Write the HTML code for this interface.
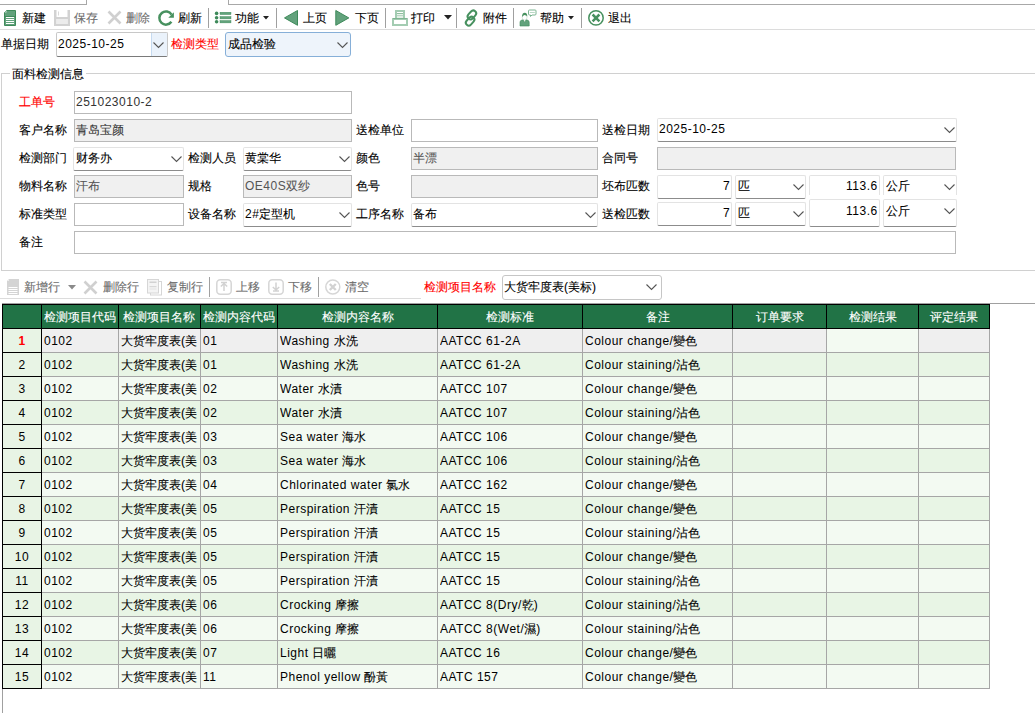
<!DOCTYPE html>
<html><head><meta charset="utf-8"><title>面料检测</title><style>
*{box-sizing:border-box}
html,body{margin:0;padding:0;background:#fff;width:1035px;height:713px;overflow:hidden;position:relative;font-family:"Liberation Sans",sans-serif;font-size:12px;color:#000}
.t{position:absolute;white-space:nowrap;line-height:16px;-webkit-text-stroke:0.1px currentColor}
.l{letter-spacing:0.5px;-webkit-text-stroke:0}
.a{position:absolute}
.g{color:#6d6d6d}
.red{color:#ff0000}
.inp{position:absolute;border:1px solid #b9b9b9;background:#fff}
.inp.dis{background:#f0f0f0}
.cmb{position:absolute;border:1px solid #e3e3e3;border-bottom:1px solid #8c8c8c;border-radius:2px;background:#fff}
.sep{position:absolute;width:1px;background:#a0a0a0}
svg{position:absolute;overflow:visible}
</style></head>
<body>
<div class="a" style="left:-1px;top:-10px;width:88px;height:15px;border-right:1px solid #a8a8a8;border-bottom:1px solid #a8a8a8"></div>
<div class="a" style="left:228px;top:-10px;width:820px;height:15px;border-left:1px solid #a8a8a8;border-bottom:1px solid #a8a8a8"></div>
<div class="a" style="left:0;top:29px;width:1035px;height:1px;background:#dcdcdc"></div>
<svg style="left:4px;top:10px" width="12" height="16"><path d="M2.5 0.5 H11.5 V15.5 H0.5 V2.5 Z" fill="#62a27c" stroke="#3e8a5a"/>
<path d="M0.5 2.5 L2.5 0.5 L2.5 2.5 Z" fill="#cfe3d6"/>
<rect x="1" y="6" width="10" height="1" fill="#3e8a5a"/>
<rect x="2" y="7" width="8" height="1" fill="#fff"/><rect x="2" y="9" width="8" height="1" fill="#fff"/><rect x="2" y="11" width="8" height="1" fill="#fff"/><rect x="2" y="13" width="8" height="1" fill="#fff"/></svg>
<div class="t" style="left:22px;top:10px;">新建</div>
<svg style="left:54px;top:10px" width="16" height="16"><rect x="0" y="0" width="2.5" height="16" fill="#d2d2d2"/><rect x="13.5" y="0" width="2.5" height="16" fill="#d2d2d2"/><rect x="0" y="7" width="16" height="2" fill="#d2d2d2"/><rect x="0" y="14" width="16" height="2" fill="#d2d2d2"/><rect x="2.5" y="9" width="11" height="5" fill="#ececec"/><rect x="4" y="1.5" width="1" height="4" fill="#dadada"/></svg>
<div class="t" style="left:74px;top:10px;color:#6d6d6d;">保存</div>
<svg style="left:107px;top:10px" width="15" height="15"><path d="M1.5 1.5 L13.5 13.5 M13.5 1.5 L1.5 13.5" stroke="#d0d0d0" stroke-width="2.6"/></svg>
<div class="t" style="left:126px;top:10px;color:#6d6d6d;">删除</div>
<svg style="left:158px;top:10px" width="17" height="16"><path d="M13.6 4.6 A6.6 6.6 0 1 0 13.4 11.8" fill="none" stroke="#47915f" stroke-width="2.5"/><path d="M15.9 2.2 L15.9 7.8 L10.3 7.8 Z" fill="#47915f"/></svg>
<div class="t" style="left:178px;top:10px;">刷新</div>
<div class="sep" style="left:208px;top:8px;height:20px"></div>
<svg style="left:214px;top:11px" width="18" height="13"><circle cx="2.6" cy="2.4" r="1.8" fill="#3e8a5a"/><circle cx="2.6" cy="6.7" r="1.8" fill="#3e8a5a"/><circle cx="2.6" cy="10.7" r="1.8" fill="#3e8a5a"/>
<rect x="6" y="1.2" width="11" height="2.4" fill="#62a27c" stroke="#3e8a5a" stroke-width="0.4"/><rect x="6" y="5.5" width="11" height="2.4" fill="#62a27c" stroke="#3e8a5a" stroke-width="0.4"/><rect x="6" y="9.5" width="11" height="2.4" fill="#62a27c" stroke="#3e8a5a" stroke-width="0.4"/></svg>
<div class="t" style="left:235px;top:10px;">功能</div>
<svg style="left:263px;top:16px" width="6" height="4"><path d="M0 0 H6 L3 3.5 Z" fill="#222"/></svg>
<div class="sep" style="left:276px;top:8px;height:20px"></div>
<svg style="left:284px;top:10px" width="15" height="16"><path d="M13.5 0.5 V15.3 L0.5 7.9 Z" fill="#62a27c" stroke="#3e8a5a" stroke-width="1"/></svg>
<div class="t" style="left:303px;top:10px;">上页</div>
<svg style="left:335px;top:10px" width="15" height="16"><path d="M0.8 0.5 V15.3 L13.8 7.9 Z" fill="#62a27c" stroke="#3e8a5a" stroke-width="1"/></svg>
<div class="t" style="left:355px;top:10px;">下页</div>
<div class="sep" style="left:385px;top:8px;height:20px"></div>
<svg style="left:392px;top:10px" width="16" height="16"><rect x="4" y="1" width="8" height="8" fill="#fff" stroke="#a3ccb2" stroke-width="2"/><rect x="5" y="3" width="6" height="1.2" fill="#8fbf9f"/><rect x="5" y="5.2" width="6" height="1.2" fill="#a9d0b6"/><rect x="5" y="6.4" width="6" height="1.6" fill="#e3efe7"/>
<rect x="1" y="9" width="14" height="6" fill="#fff" stroke="#a3ccb2" stroke-width="2"/><rect x="1" y="8" width="14" height="1" fill="#7fb592"/></svg>
<div class="t" style="left:411px;top:10px;">打印</div>
<svg style="left:444px;top:15px" width="8" height="5"><path d="M0 0 H8 L4 4.5 Z" fill="#222"/></svg>
<div class="sep" style="left:456px;top:8px;height:20px"></div>
<svg style="left:464px;top:9px" width="15" height="18"><g fill="none" stroke="#47915f" stroke-width="2">
<rect x="-4.9" y="-2.9" width="9.8" height="5.8" rx="2.9" transform="translate(7.9 5.9) rotate(-48)"/>
<rect x="-4.9" y="-2.9" width="9.8" height="5.8" rx="2.9" transform="translate(6.1 12.2) rotate(-48)"/></g></svg>
<div class="t" style="left:483px;top:10px;">附件</div>
<div class="sep" style="left:513px;top:8px;height:20px"></div>
<svg style="left:519px;top:9px" width="18" height="17"><ellipse cx="5.6" cy="8.3" rx="2.4" ry="2.8" fill="#fff" stroke="#c9ded0" stroke-width="0.7"/>
<path d="M3 8.2 Q3 3.8 5.8 3.8 Q8.4 3.8 8.3 7.6 Q7.4 6 5.6 5.9 Q3.8 6.1 3 8.2 Z" fill="#47915f"/>
<path d="M1 17 V13.2 Q1 11.6 2.8 11.1 L4.2 10.9 L5.6 13.4 L7 10.9 L8.4 11.1 Q10.2 11.6 10.2 13.2 V17 Z" fill="#62a27c" stroke="#3e8a5a" stroke-width="0.6"/>
<path d="M9.5 1.8 Q9.5 1 10.5 1 H16 Q17 1 17 1.8 V5 Q17 6 16 6 H13 L11.5 7.5 L11.5 6 H10.5 Q9.5 6 9.5 5 Z" fill="#fff" stroke="#7db592" stroke-width="1"/><rect x="10.8" y="3" width="5" height="1" fill="#b9d8c4"/></svg>
<div class="t" style="left:540px;top:10px;">帮助</div>
<svg style="left:568px;top:16px" width="6" height="4"><path d="M0 0 H6 L3 3.5 Z" fill="#222"/></svg>
<div class="sep" style="left:581px;top:8px;height:20px"></div>
<svg style="left:588px;top:10px" width="17" height="16"><circle cx="8" cy="7.9" r="7.2" fill="#fff" stroke="#47915f" stroke-width="1.5"/><path d="M4.6 4.5 L11.4 11.3 M11.4 4.5 L4.6 11.3" stroke="#47915f" stroke-width="2.5"/></svg>
<div class="t" style="left:608px;top:10px;">退出</div>
<div class="t" style="left:1px;top:36px;">单据日期</div>
<div class="inp" style="left:56px;top:32px;width:112px;height:25px;border-color:#c8c8c8;border-bottom-color:#7a7a7a;border-radius:2px"></div>
<div class="a" style="left:151px;top:33px;width:16px;height:23px;background:#eaf2fb;border-left:1px solid #c5daf0"></div>
<svg class="a" style="left:153px;top:42px" width="11" height="7"><path d="M0.5 0.5 L5.5 5.5 L10.5 0.5" fill="none" stroke="#555" stroke-width="1.1"/></svg>
<div class="t" style="left:58px;top:36px;"><span class="l">2025-10-25</span></div>
<div class="t" style="left:171px;top:36px;color:#ff0000;">检测类型</div>
<div class="a" style="left:225px;top:32px;width:126px;height:25px;border:1px solid #86afd8;border-radius:3px;background:#eef4fb"></div>
<div class="t" style="left:228px;top:36px;">成品检验</div>
<svg class="a" style="left:337px;top:42px" width="11" height="7"><path d="M0.5 0.5 L5.5 5.5 L10.5 0.5" fill="none" stroke="#555" stroke-width="1.1"/></svg>
<div class="a" style="left:1px;top:73px;width:1040px;height:198px;border:1px solid #d0d0d0;border-right:none"></div>
<div class="t" style="left:10px;top:66px;background:#fff;padding:0 2px">面料检测信息</div>
<div class="t" style="left:19px;top:94px;color:#ff0000;">工单号</div>
<div class="inp" style="left:74px;top:91px;width:278px;height:23px;"></div>
<div class="t" style="left:76px;top:94px;color:#333;"><span class="l">251023010-2</span></div>
<div class="t" style="left:19px;top:122px;">客户名称</div>
<div class="inp dis" style="left:74px;top:119px;width:278px;height:23px;"></div>
<div class="t" style="left:76px;top:122px;color:#333;">青岛宝颜</div>
<div class="t" style="left:356px;top:122px;">送检单位</div>
<div class="inp" style="left:411px;top:119px;width:187px;height:23px;"></div>
<div class="t" style="left:602px;top:122px;">送检日期</div>
<div class="cmb" style="left:657px;top:118px;width:300px;height:24px;"></div>
<svg class="a" style="left:944px;top:127px" width="11" height="7"><path d="M0.5 0.5 L5.5 5.5 L10.5 0.5" fill="none" stroke="#555" stroke-width="1.1"/></svg>
<div class="t" style="left:659px;top:121px;"><span class="l">2025-10-25</span></div>
<div class="t" style="left:19px;top:150px;">检测部门</div>
<div class="cmb" style="left:73px;top:147px;width:111px;height:24px;"></div>
<svg class="a" style="left:171px;top:156px" width="11" height="7"><path d="M0.5 0.5 L5.5 5.5 L10.5 0.5" fill="none" stroke="#555" stroke-width="1.1"/></svg>
<div class="t" style="left:76px;top:150px;">财务办</div>
<div class="t" style="left:188px;top:150px;">检测人员</div>
<div class="cmb" style="left:243px;top:147px;width:109px;height:24px;"></div>
<svg class="a" style="left:339px;top:156px" width="11" height="7"><path d="M0.5 0.5 L5.5 5.5 L10.5 0.5" fill="none" stroke="#555" stroke-width="1.1"/></svg>
<div class="t" style="left:245px;top:150px;">黄棠华</div>
<div class="t" style="left:356px;top:150px;">颜色</div>
<div class="inp dis" style="left:411px;top:147px;width:187px;height:23px;"></div>
<div class="t" style="left:413px;top:150px;color:#555;">半漂</div>
<div class="t" style="left:602px;top:150px;">合同号</div>
<div class="inp dis" style="left:657px;top:147px;width:299px;height:23px;"></div>
<div class="t" style="left:19px;top:178px;">物料名称</div>
<div class="inp dis" style="left:74px;top:175px;width:110px;height:23px;"></div>
<div class="t" style="left:76px;top:178px;color:#555;">汗布</div>
<div class="t" style="left:188px;top:178px;">规格</div>
<div class="inp dis" style="left:243px;top:175px;width:109px;height:23px;"></div>
<div class="t" style="left:245px;top:178px;color:#555;"><span class="l">OE40S</span>双纱</div>
<div class="t" style="left:356px;top:178px;">色号</div>
<div class="inp dis" style="left:411px;top:175px;width:187px;height:23px;"></div>
<div class="t" style="left:602px;top:178px;">坯布匹数</div>
<div class="t" style="left:19px;top:206px;">标准类型</div>
<div class="inp" style="left:74px;top:203px;width:110px;height:23px;"></div>
<div class="t" style="left:188px;top:206px;">设备名称</div>
<div class="cmb" style="left:243px;top:203px;width:109px;height:24px;"></div>
<svg class="a" style="left:339px;top:212px" width="11" height="7"><path d="M0.5 0.5 L5.5 5.5 L10.5 0.5" fill="none" stroke="#555" stroke-width="1.1"/></svg>
<div class="t" style="left:245px;top:206px;"><span class="l">2#</span>定型机</div>
<div class="t" style="left:356px;top:206px;">工序名称</div>
<div class="cmb" style="left:411px;top:203px;width:187px;height:24px;"></div>
<svg class="a" style="left:585px;top:212px" width="11" height="7"><path d="M0.5 0.5 L5.5 5.5 L10.5 0.5" fill="none" stroke="#555" stroke-width="1.1"/></svg>
<div class="t" style="left:413px;top:206px;">备布</div>
<div class="t" style="left:602px;top:206px;">送检匹数</div>
<div class="cmb" style="left:657px;top:175px;width:75px;height:24px"></div>
<div class="t" style="left:723px;top:178px;"><span class="l">7</span></div>
<div class="cmb" style="left:735px;top:175px;width:71px;height:24px;"></div>
<svg class="a" style="left:793px;top:184px" width="11" height="7"><path d="M0.5 0.5 L5.5 5.5 L10.5 0.5" fill="none" stroke="#555" stroke-width="1.1"/></svg>
<div class="t" style="left:738px;top:178px;">匹</div>
<div class="cmb" style="left:657px;top:202px;width:75px;height:24px"></div>
<div class="t" style="left:723px;top:205px;"><span class="l">7</span></div>
<div class="cmb" style="left:735px;top:202px;width:71px;height:24px;"></div>
<svg class="a" style="left:793px;top:211px" width="11" height="7"><path d="M0.5 0.5 L5.5 5.5 L10.5 0.5" fill="none" stroke="#555" stroke-width="1.1"/></svg>
<div class="t" style="left:738px;top:205px;">匹</div>
<div class="a" style="left:809px;top:175px;width:71px;height:20px;overflow:hidden"><div class="cmb" style="left:0;top:0;width:71px;height:24px"></div></div>
<div class="t" style="left:846px;top:178px;"><span class="l">113.6</span></div>
<div class="a" style="left:883px;top:175px;width:74px;height:20px;overflow:hidden"><div class="cmb" style="left:0;top:0;width:74px;height:24px"></div></div>
<svg class="a" style="left:944px;top:184px" width="11" height="7"><path d="M0.5 0.5 L5.5 5.5 L10.5 0.5" fill="none" stroke="#555" stroke-width="1.1"/></svg>
<div class="t" style="left:886px;top:178px;">公斤</div>
<div class="cmb" style="left:809px;top:199px;width:71px;height:28px"></div>
<div class="t" style="left:846px;top:203px;"><span class="l">113.6</span></div>
<div class="cmb" style="left:883px;top:199px;width:74px;height:28px;"></div>
<svg class="a" style="left:944px;top:208px" width="11" height="7"><path d="M0.5 0.5 L5.5 5.5 L10.5 0.5" fill="none" stroke="#555" stroke-width="1.1"/></svg>
<div class="t" style="left:886px;top:203px;">公斤</div>
<div class="t" style="left:19px;top:234px;">备注</div>
<div class="inp" style="left:74px;top:231px;width:882px;height:23px;"></div>
<div class="a" style="left:0;top:298px;width:421px;height:1px;background:#dcdcdc"></div>
<div class="a" style="left:662px;top:303px;width:380px;height:1px;background:#dcdcdc"></div>
<svg style="left:7px;top:279px" width="12" height="16"><path d="M2 0 H12 V16 H0 V2 Z" fill="#d4d4d4"/><path d="M0 2 L2 0 V2 Z" fill="#eee"/><rect x="1.5" y="10" width="9" height="1" fill="#fff"/><rect x="1.5" y="12" width="9" height="1" fill="#fff"/><rect x="1.5" y="14" width="9" height="1" fill="#fff"/><rect x="1.5" y="8" width="9" height="1" fill="#fff"/></svg>
<div class="t" style="left:24px;top:279px;color:#6d6d6d;">新增行</div>
<svg style="left:68px;top:285px" width="8" height="5"><path d="M0 0 H8 L4 4.5 Z" fill="#8a8a8a"/></svg>
<svg style="left:83px;top:280px" width="15" height="15"><path d="M1.5 1.5 L13.5 13.5 M13.5 1.5 L1.5 13.5" stroke="#d0d0d0" stroke-width="2.6"/></svg>
<div class="t" style="left:103px;top:279px;color:#6d6d6d;">删除行</div>
<svg style="left:147px;top:279px" width="16" height="17"><rect x="3.5" y="2.5" width="11" height="13.5" fill="#fff" stroke="#d6d6d6"/><rect x="0.5" y="0.5" width="11" height="13.5" fill="#f4f4f4" stroke="#d6d6d6"/><rect x="2.5" y="2.5" width="7" height="1.5" fill="#d2d2d2"/><rect x="2.5" y="7" width="7" height="1.2" fill="#d8d8d8"/><rect x="2.5" y="9.5" width="7" height="1" fill="#e2e2e2"/></svg>
<div class="t" style="left:167px;top:279px;color:#6d6d6d;">复制行</div>
<div class="sep" style="left:209px;top:277px;height:20px"></div>
<svg style="left:216px;top:279px" width="16" height="16"><rect x="0.8" y="0.8" width="14.4" height="14.4" rx="3.5" fill="#fff" stroke="#d6d6d6" stroke-width="1.5"/><path d="M5 3.5 H11 M8 12 V5 M4.8 7.5 L8 4.5 L11.2 7.5" fill="none" stroke="#d2d2d2" stroke-width="1.5"/></svg>
<div class="t" style="left:236px;top:279px;color:#6d6d6d;">上移</div>
<svg style="left:268px;top:279px" width="16" height="16"><rect x="0.8" y="0.8" width="14.4" height="14.4" rx="3.5" fill="#fff" stroke="#d6d6d6" stroke-width="1.5"/><path d="M5 12 H11 M8 3.5 V10.5 M4.8 8 L8 11 L11.2 8" fill="none" stroke="#d2d2d2" stroke-width="1.5"/></svg>
<div class="t" style="left:288px;top:279px;color:#6d6d6d;">下移</div>
<div class="sep" style="left:318px;top:277px;height:20px"></div>
<svg style="left:325px;top:279px" width="16" height="16"><circle cx="7.8" cy="8" r="7" fill="#fff" stroke="#d6d6d6" stroke-width="1.5"/><path d="M4.8 5 L10.8 11 M10.8 5 L4.8 11" stroke="#d2d2d2" stroke-width="2.4"/></svg>
<div class="t" style="left:345px;top:279px;color:#6d6d6d;">清空</div>
<div class="t" style="left:424px;top:279px;color:#ff0000;">检测项目名称</div>
<div class="a" style="left:502px;top:275px;width:160px;height:25px;border:1px solid #c6c6c6;border-radius:3px;background:#fff"></div>
<div class="t" style="left:504px;top:279px;">大货牢度表(美标)</div>
<svg class="a" style="left:646px;top:284px" width="11" height="7"><path d="M0.5 0.5 L5.5 5.5 L10.5 0.5" fill="none" stroke="#555" stroke-width="1.1"/></svg>
<div class="a" style="left:2px;top:303px;width:1040px;height:420px;border:1px solid #a0a0a0;border-right:none;border-bottom:none"></div>
<div class="a" style="left:2px;top:304px;width:988px;height:25px;background:#217346;border:1px solid #000"></div>
<div class="a" style="left:41px;top:304px;width:1px;height:25px;background:#000"></div>
<div class="a" style="left:118px;top:304px;width:1px;height:25px;background:#000"></div>
<div class="a" style="left:200px;top:304px;width:1px;height:25px;background:#000"></div>
<div class="a" style="left:277px;top:304px;width:1px;height:25px;background:#000"></div>
<div class="a" style="left:437px;top:304px;width:1px;height:25px;background:#000"></div>
<div class="a" style="left:582px;top:304px;width:1px;height:25px;background:#000"></div>
<div class="a" style="left:732px;top:304px;width:1px;height:25px;background:#000"></div>
<div class="a" style="left:826px;top:304px;width:1px;height:25px;background:#000"></div>
<div class="a" style="left:918px;top:304px;width:1px;height:25px;background:#000"></div>
<div class="t" style="left:44px;top:309px;color:#fff">检测项目代码</div>
<div class="t" style="left:123px;top:309px;color:#fff">检测项目名称</div>
<div class="t" style="left:203px;top:309px;color:#fff">检测内容代码</div>
<div class="t" style="left:278px;width:159px;top:309px;color:#fff;text-align:center">检测内容名称</div>
<div class="t" style="left:438px;width:144px;top:309px;color:#fff;text-align:center">检测标准</div>
<div class="t" style="left:583px;width:149px;top:309px;color:#fff;text-align:center">备注</div>
<div class="t" style="left:733px;width:93px;top:309px;color:#fff;text-align:center">订单要求</div>
<div class="t" style="left:827px;width:91px;top:309px;color:#fff;text-align:center">检测结果</div>
<div class="t" style="left:919px;width:70px;top:309px;color:#fff;text-align:center">评定结果</div>
<div class="a" style="left:42px;top:329px;width:947px;height:23px;background:#efefef"></div>
<div class="a" style="left:827px;top:329px;width:91px;height:23px;background:#f3faf2"></div>
<div class="a" style="left:42px;top:352px;width:948px;height:1px;background:#a6a6a6"></div>
<div class="a" style="left:2px;top:328px;width:40px;height:25px;border:1px solid #000;background:#e8f4e5"></div>
<div class="t" style="left:3px;width:38px;top:333px;text-align:center;color:#ff0000;font-weight:bold"><span class="l">1</span></div>
<div class="t" style="left:44px;top:333px;width:73px;overflow:hidden"><span class="l">0102</span></div>
<div class="t" style="left:121px;top:333px;width:78px;overflow:hidden">大货牢度表(美</div>
<div class="t" style="left:203px;top:333px;width:73px;overflow:hidden"><span class="l">01</span></div>
<div class="t" style="left:280px;top:333px;width:156px;overflow:hidden"><span class="l">Washing </span>水洗</div>
<div class="t" style="left:440px;top:333px;width:141px;overflow:hidden"><span class="l">AATCC 61-2A</span></div>
<div class="t" style="left:585px;top:333px;width:146px;overflow:hidden"><span class="l">Colour change/</span>變色</div>
<div class="a" style="left:42px;top:353px;width:947px;height:23px;background:#e8f5e5"></div>
<div class="a" style="left:42px;top:376px;width:948px;height:1px;background:#a6a6a6"></div>
<div class="a" style="left:2px;top:352px;width:40px;height:25px;border:1px solid #000;background:#e8f4e5"></div>
<div class="t" style="left:3px;width:38px;top:357px;text-align:center;color:#000"><span class="l">2</span></div>
<div class="t" style="left:44px;top:357px;width:73px;overflow:hidden"><span class="l">0102</span></div>
<div class="t" style="left:121px;top:357px;width:78px;overflow:hidden">大货牢度表(美</div>
<div class="t" style="left:203px;top:357px;width:73px;overflow:hidden"><span class="l">01</span></div>
<div class="t" style="left:280px;top:357px;width:156px;overflow:hidden"><span class="l">Washing </span>水洗</div>
<div class="t" style="left:440px;top:357px;width:141px;overflow:hidden"><span class="l">AATCC 61-2A</span></div>
<div class="t" style="left:585px;top:357px;width:146px;overflow:hidden"><span class="l">Colour staining/</span>沾色</div>
<div class="a" style="left:42px;top:377px;width:947px;height:23px;background:#f3faf2"></div>
<div class="a" style="left:42px;top:400px;width:948px;height:1px;background:#a6a6a6"></div>
<div class="a" style="left:2px;top:376px;width:40px;height:25px;border:1px solid #000;background:#e8f4e5"></div>
<div class="t" style="left:3px;width:38px;top:381px;text-align:center;color:#000"><span class="l">3</span></div>
<div class="t" style="left:44px;top:381px;width:73px;overflow:hidden"><span class="l">0102</span></div>
<div class="t" style="left:121px;top:381px;width:78px;overflow:hidden">大货牢度表(美</div>
<div class="t" style="left:203px;top:381px;width:73px;overflow:hidden"><span class="l">02</span></div>
<div class="t" style="left:280px;top:381px;width:156px;overflow:hidden"><span class="l">Water </span>水漬</div>
<div class="t" style="left:440px;top:381px;width:141px;overflow:hidden"><span class="l">AATCC 107</span></div>
<div class="t" style="left:585px;top:381px;width:146px;overflow:hidden"><span class="l">Colour change/</span>變色</div>
<div class="a" style="left:42px;top:401px;width:947px;height:23px;background:#e8f5e5"></div>
<div class="a" style="left:42px;top:424px;width:948px;height:1px;background:#a6a6a6"></div>
<div class="a" style="left:2px;top:400px;width:40px;height:25px;border:1px solid #000;background:#e8f4e5"></div>
<div class="t" style="left:3px;width:38px;top:405px;text-align:center;color:#000"><span class="l">4</span></div>
<div class="t" style="left:44px;top:405px;width:73px;overflow:hidden"><span class="l">0102</span></div>
<div class="t" style="left:121px;top:405px;width:78px;overflow:hidden">大货牢度表(美</div>
<div class="t" style="left:203px;top:405px;width:73px;overflow:hidden"><span class="l">02</span></div>
<div class="t" style="left:280px;top:405px;width:156px;overflow:hidden"><span class="l">Water </span>水漬</div>
<div class="t" style="left:440px;top:405px;width:141px;overflow:hidden"><span class="l">AATCC 107</span></div>
<div class="t" style="left:585px;top:405px;width:146px;overflow:hidden"><span class="l">Colour staining/</span>沾色</div>
<div class="a" style="left:42px;top:425px;width:947px;height:23px;background:#f3faf2"></div>
<div class="a" style="left:42px;top:448px;width:948px;height:1px;background:#a6a6a6"></div>
<div class="a" style="left:2px;top:424px;width:40px;height:25px;border:1px solid #000;background:#e8f4e5"></div>
<div class="t" style="left:3px;width:38px;top:429px;text-align:center;color:#000"><span class="l">5</span></div>
<div class="t" style="left:44px;top:429px;width:73px;overflow:hidden"><span class="l">0102</span></div>
<div class="t" style="left:121px;top:429px;width:78px;overflow:hidden">大货牢度表(美</div>
<div class="t" style="left:203px;top:429px;width:73px;overflow:hidden"><span class="l">03</span></div>
<div class="t" style="left:280px;top:429px;width:156px;overflow:hidden"><span class="l">Sea water </span>海水</div>
<div class="t" style="left:440px;top:429px;width:141px;overflow:hidden"><span class="l">AATCC 106</span></div>
<div class="t" style="left:585px;top:429px;width:146px;overflow:hidden"><span class="l">Colour change/</span>變色</div>
<div class="a" style="left:42px;top:449px;width:947px;height:23px;background:#e8f5e5"></div>
<div class="a" style="left:42px;top:472px;width:948px;height:1px;background:#a6a6a6"></div>
<div class="a" style="left:2px;top:448px;width:40px;height:25px;border:1px solid #000;background:#e8f4e5"></div>
<div class="t" style="left:3px;width:38px;top:453px;text-align:center;color:#000"><span class="l">6</span></div>
<div class="t" style="left:44px;top:453px;width:73px;overflow:hidden"><span class="l">0102</span></div>
<div class="t" style="left:121px;top:453px;width:78px;overflow:hidden">大货牢度表(美</div>
<div class="t" style="left:203px;top:453px;width:73px;overflow:hidden"><span class="l">03</span></div>
<div class="t" style="left:280px;top:453px;width:156px;overflow:hidden"><span class="l">Sea water </span>海水</div>
<div class="t" style="left:440px;top:453px;width:141px;overflow:hidden"><span class="l">AATCC 106</span></div>
<div class="t" style="left:585px;top:453px;width:146px;overflow:hidden"><span class="l">Colour staining/</span>沾色</div>
<div class="a" style="left:42px;top:473px;width:947px;height:23px;background:#f3faf2"></div>
<div class="a" style="left:42px;top:496px;width:948px;height:1px;background:#a6a6a6"></div>
<div class="a" style="left:2px;top:472px;width:40px;height:25px;border:1px solid #000;background:#e8f4e5"></div>
<div class="t" style="left:3px;width:38px;top:477px;text-align:center;color:#000"><span class="l">7</span></div>
<div class="t" style="left:44px;top:477px;width:73px;overflow:hidden"><span class="l">0102</span></div>
<div class="t" style="left:121px;top:477px;width:78px;overflow:hidden">大货牢度表(美</div>
<div class="t" style="left:203px;top:477px;width:73px;overflow:hidden"><span class="l">04</span></div>
<div class="t" style="left:280px;top:477px;width:156px;overflow:hidden"><span class="l">Chlorinated water </span>氯水</div>
<div class="t" style="left:440px;top:477px;width:141px;overflow:hidden"><span class="l">AATCC 162</span></div>
<div class="t" style="left:585px;top:477px;width:146px;overflow:hidden"><span class="l">Colour change/</span>變色</div>
<div class="a" style="left:42px;top:497px;width:947px;height:23px;background:#e8f5e5"></div>
<div class="a" style="left:42px;top:520px;width:948px;height:1px;background:#a6a6a6"></div>
<div class="a" style="left:2px;top:496px;width:40px;height:25px;border:1px solid #000;background:#e8f4e5"></div>
<div class="t" style="left:3px;width:38px;top:501px;text-align:center;color:#000"><span class="l">8</span></div>
<div class="t" style="left:44px;top:501px;width:73px;overflow:hidden"><span class="l">0102</span></div>
<div class="t" style="left:121px;top:501px;width:78px;overflow:hidden">大货牢度表(美</div>
<div class="t" style="left:203px;top:501px;width:73px;overflow:hidden"><span class="l">05</span></div>
<div class="t" style="left:280px;top:501px;width:156px;overflow:hidden"><span class="l">Perspiration </span>汗漬</div>
<div class="t" style="left:440px;top:501px;width:141px;overflow:hidden"><span class="l">AATCC 15</span></div>
<div class="t" style="left:585px;top:501px;width:146px;overflow:hidden"><span class="l">Colour change/</span>變色</div>
<div class="a" style="left:42px;top:521px;width:947px;height:23px;background:#f3faf2"></div>
<div class="a" style="left:42px;top:544px;width:948px;height:1px;background:#a6a6a6"></div>
<div class="a" style="left:2px;top:520px;width:40px;height:25px;border:1px solid #000;background:#e8f4e5"></div>
<div class="t" style="left:3px;width:38px;top:525px;text-align:center;color:#000"><span class="l">9</span></div>
<div class="t" style="left:44px;top:525px;width:73px;overflow:hidden"><span class="l">0102</span></div>
<div class="t" style="left:121px;top:525px;width:78px;overflow:hidden">大货牢度表(美</div>
<div class="t" style="left:203px;top:525px;width:73px;overflow:hidden"><span class="l">05</span></div>
<div class="t" style="left:280px;top:525px;width:156px;overflow:hidden"><span class="l">Perspiration </span>汗漬</div>
<div class="t" style="left:440px;top:525px;width:141px;overflow:hidden"><span class="l">AATCC 15</span></div>
<div class="t" style="left:585px;top:525px;width:146px;overflow:hidden"><span class="l">Colour staining/</span>沾色</div>
<div class="a" style="left:42px;top:545px;width:947px;height:23px;background:#e8f5e5"></div>
<div class="a" style="left:42px;top:568px;width:948px;height:1px;background:#a6a6a6"></div>
<div class="a" style="left:2px;top:544px;width:40px;height:25px;border:1px solid #000;background:#e8f4e5"></div>
<div class="t" style="left:3px;width:38px;top:549px;text-align:center;color:#000"><span class="l">10</span></div>
<div class="t" style="left:44px;top:549px;width:73px;overflow:hidden"><span class="l">0102</span></div>
<div class="t" style="left:121px;top:549px;width:78px;overflow:hidden">大货牢度表(美</div>
<div class="t" style="left:203px;top:549px;width:73px;overflow:hidden"><span class="l">05</span></div>
<div class="t" style="left:280px;top:549px;width:156px;overflow:hidden"><span class="l">Perspiration </span>汗漬</div>
<div class="t" style="left:440px;top:549px;width:141px;overflow:hidden"><span class="l">AATCC 15</span></div>
<div class="t" style="left:585px;top:549px;width:146px;overflow:hidden"><span class="l">Colour change/</span>變色</div>
<div class="a" style="left:42px;top:569px;width:947px;height:23px;background:#f3faf2"></div>
<div class="a" style="left:42px;top:592px;width:948px;height:1px;background:#a6a6a6"></div>
<div class="a" style="left:2px;top:568px;width:40px;height:25px;border:1px solid #000;background:#e8f4e5"></div>
<div class="t" style="left:3px;width:38px;top:573px;text-align:center;color:#000"><span class="l">11</span></div>
<div class="t" style="left:44px;top:573px;width:73px;overflow:hidden"><span class="l">0102</span></div>
<div class="t" style="left:121px;top:573px;width:78px;overflow:hidden">大货牢度表(美</div>
<div class="t" style="left:203px;top:573px;width:73px;overflow:hidden"><span class="l">05</span></div>
<div class="t" style="left:280px;top:573px;width:156px;overflow:hidden"><span class="l">Perspiration </span>汗漬</div>
<div class="t" style="left:440px;top:573px;width:141px;overflow:hidden"><span class="l">AATCC 15</span></div>
<div class="t" style="left:585px;top:573px;width:146px;overflow:hidden"><span class="l">Colour staining/</span>沾色</div>
<div class="a" style="left:42px;top:593px;width:947px;height:23px;background:#e8f5e5"></div>
<div class="a" style="left:42px;top:616px;width:948px;height:1px;background:#a6a6a6"></div>
<div class="a" style="left:2px;top:592px;width:40px;height:25px;border:1px solid #000;background:#e8f4e5"></div>
<div class="t" style="left:3px;width:38px;top:597px;text-align:center;color:#000"><span class="l">12</span></div>
<div class="t" style="left:44px;top:597px;width:73px;overflow:hidden"><span class="l">0102</span></div>
<div class="t" style="left:121px;top:597px;width:78px;overflow:hidden">大货牢度表(美</div>
<div class="t" style="left:203px;top:597px;width:73px;overflow:hidden"><span class="l">06</span></div>
<div class="t" style="left:280px;top:597px;width:156px;overflow:hidden"><span class="l">Crocking </span>摩擦</div>
<div class="t" style="left:440px;top:597px;width:141px;overflow:hidden"><span class="l">AATCC 8(Dry/</span>乾<span class="l">)</span></div>
<div class="t" style="left:585px;top:597px;width:146px;overflow:hidden"><span class="l">Colour staining/</span>沾色</div>
<div class="a" style="left:42px;top:617px;width:947px;height:23px;background:#f3faf2"></div>
<div class="a" style="left:42px;top:640px;width:948px;height:1px;background:#a6a6a6"></div>
<div class="a" style="left:2px;top:616px;width:40px;height:25px;border:1px solid #000;background:#e8f4e5"></div>
<div class="t" style="left:3px;width:38px;top:621px;text-align:center;color:#000"><span class="l">13</span></div>
<div class="t" style="left:44px;top:621px;width:73px;overflow:hidden"><span class="l">0102</span></div>
<div class="t" style="left:121px;top:621px;width:78px;overflow:hidden">大货牢度表(美</div>
<div class="t" style="left:203px;top:621px;width:73px;overflow:hidden"><span class="l">06</span></div>
<div class="t" style="left:280px;top:621px;width:156px;overflow:hidden"><span class="l">Crocking </span>摩擦</div>
<div class="t" style="left:440px;top:621px;width:141px;overflow:hidden"><span class="l">AATCC 8(Wet/</span>濕<span class="l">)</span></div>
<div class="t" style="left:585px;top:621px;width:146px;overflow:hidden"><span class="l">Colour staining/</span>沾色</div>
<div class="a" style="left:42px;top:641px;width:947px;height:23px;background:#e8f5e5"></div>
<div class="a" style="left:42px;top:664px;width:948px;height:1px;background:#a6a6a6"></div>
<div class="a" style="left:2px;top:640px;width:40px;height:25px;border:1px solid #000;background:#e8f4e5"></div>
<div class="t" style="left:3px;width:38px;top:645px;text-align:center;color:#000"><span class="l">14</span></div>
<div class="t" style="left:44px;top:645px;width:73px;overflow:hidden"><span class="l">0102</span></div>
<div class="t" style="left:121px;top:645px;width:78px;overflow:hidden">大货牢度表(美</div>
<div class="t" style="left:203px;top:645px;width:73px;overflow:hidden"><span class="l">07</span></div>
<div class="t" style="left:280px;top:645px;width:156px;overflow:hidden"><span class="l">Light </span>日曬</div>
<div class="t" style="left:440px;top:645px;width:141px;overflow:hidden"><span class="l">AATCC 16</span></div>
<div class="t" style="left:585px;top:645px;width:146px;overflow:hidden"><span class="l">Colour change/</span>變色</div>
<div class="a" style="left:42px;top:665px;width:947px;height:23px;background:#f3faf2"></div>
<div class="a" style="left:42px;top:688px;width:948px;height:1px;background:#a6a6a6"></div>
<div class="a" style="left:2px;top:664px;width:40px;height:25px;border:1px solid #000;background:#e8f4e5"></div>
<div class="t" style="left:3px;width:38px;top:669px;text-align:center;color:#000"><span class="l">15</span></div>
<div class="t" style="left:44px;top:669px;width:73px;overflow:hidden"><span class="l">0102</span></div>
<div class="t" style="left:121px;top:669px;width:78px;overflow:hidden">大货牢度表(美</div>
<div class="t" style="left:203px;top:669px;width:73px;overflow:hidden"><span class="l">11</span></div>
<div class="t" style="left:280px;top:669px;width:156px;overflow:hidden"><span class="l">Phenol yellow </span>酚黃</div>
<div class="t" style="left:440px;top:669px;width:141px;overflow:hidden"><span class="l">AATC 157</span></div>
<div class="t" style="left:585px;top:669px;width:146px;overflow:hidden"><span class="l">Colour change/</span>變色</div>
<div class="a" style="left:118px;top:329px;width:1px;height:360px;background:#a6a6a6"></div>
<div class="a" style="left:200px;top:329px;width:1px;height:360px;background:#a6a6a6"></div>
<div class="a" style="left:277px;top:329px;width:1px;height:360px;background:#a6a6a6"></div>
<div class="a" style="left:437px;top:329px;width:1px;height:360px;background:#a6a6a6"></div>
<div class="a" style="left:582px;top:329px;width:1px;height:360px;background:#a6a6a6"></div>
<div class="a" style="left:732px;top:329px;width:1px;height:360px;background:#a6a6a6"></div>
<div class="a" style="left:826px;top:329px;width:1px;height:360px;background:#a6a6a6"></div>
<div class="a" style="left:918px;top:329px;width:1px;height:360px;background:#a6a6a6"></div>
<div class="a" style="left:989px;top:329px;width:1px;height:360px;background:#a6a6a6"></div>
</body></html>
